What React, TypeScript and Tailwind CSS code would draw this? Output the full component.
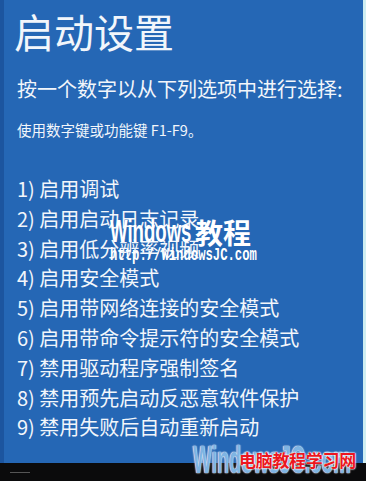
import React from "react";

const items = [
  "1) 启用调试",
  "2) 启用启动日志记录",
  "3) 启用低分辨率视频",
  "4) 启用安全模式",
  "5) 启用带网络连接的安全模式",
  "6) 启用带命令提示符的安全模式",
  "7) 禁用驱动程序强制签名",
  "8) 禁用预先启动反恶意软件保护",
  "9) 禁用失败后自动重新启动",
];

export default function App() {
  const cjk = { fontFamily: '"Noto Sans CJK SC", "Noto Sans", sans-serif' };
  return (
    <div className="relative w-[366px] h-[481px] overflow-hidden flex flex-col bg-[#0b0b0c]" style={cjk}>
      <div className="flex flex-1 min-h-0">
        <div className="w-[4px] bg-[#1c559f]" />
        <div className="flex-1 bg-[#2567b5] text-[#f2f6fb] pl-[10px] flex flex-col">
          <div className="mt-[11px] text-[40px] leading-[40px]">启动设置</div>
          <div className="mt-[24px] pl-[3px] text-[20px] leading-[28px]">按一个数字以从下列选项中进行选择:</div>
          <div className="mt-[17px] pl-[3px] text-[14.5px] leading-[20px]">使用数字键或功能键 F1-F9。</div>
          <div className="mt-[34px] pl-[3px] flex flex-col">
            {items.map((t) => (
              <div key={t} className="text-[20px] leading-[29.8px] whitespace-nowrap">{t}</div>
            ))}
          </div>
        </div>
        <div className="w-[3px] bg-[#cfeef2]" />
      </div>
      <div className="h-[18px] bg-[#0b0b0c] flex items-center pl-[10px]">
        <div className="w-[20px] h-[1px] bg-[#555]" />
      </div>

      {/* watermark center */}
      <div className="absolute left-[110px] top-[217px] flex items-end">
        <span
          className="text-[31px] leading-[30px] font-bold text-white origin-left scale-x-[0.6] inline-block w-[85px] whitespace-nowrap"
          style={{ fontFamily: '"Liberation Sans", sans-serif' }}
        >
          Windows
        </span>
        <span className="text-[28px] leading-[30px] font-bold text-white">教程</span>
      </div>
      <div
        className="absolute left-[110px] top-[246px] text-[18px] leading-[18px] font-bold text-white origin-left scale-x-[0.68] whitespace-nowrap"
        style={{ fontFamily: '"Liberation Mono", monospace' }}
      >
        http://WindowsJC.com
      </div>

      {/* watermark bottom */}
      <div
        className="absolute left-[193px] top-[441px] text-[38px] leading-[38px] font-bold text-[#7fb4e2] origin-left scale-x-[0.52] whitespace-nowrap [text-shadow:0_0_2px_#fff,0_0_2px_#fff]"
        style={{ fontFamily: '"Liberation Sans", sans-serif' }}
      >
        WindowsJC.com
      </div>
      <div className="absolute left-[239px] top-[449px] text-[17px] leading-[22px] font-bold text-[#ec1620] tracking-[-0.3px] whitespace-nowrap [text-shadow:0_0_2px_#fff,0_0_2px_#fff,0_0_1px_#fff]">
        电脑教程学习网
      </div>
    </div>
  );
}
